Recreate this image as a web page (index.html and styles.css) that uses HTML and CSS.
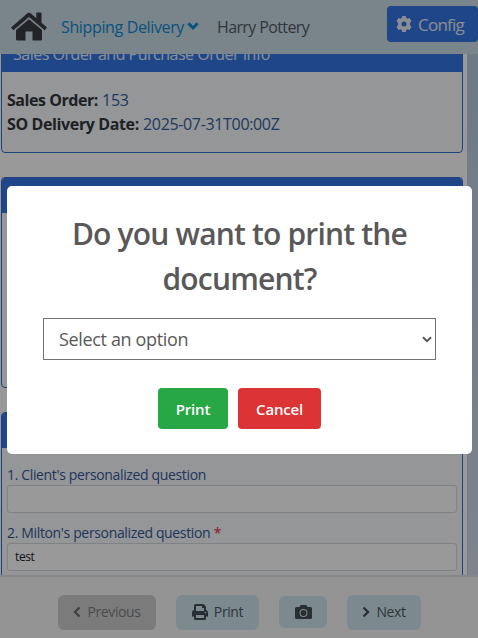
FILE: index.html
```html
<!DOCTYPE html>
<html lang="en">
<head>
<meta charset="utf-8">
<title>Shipping Delivery</title>
<link rel="stylesheet" href="styles.css">
</head>
<body>
<div class="app">
  <header class="nav">
    <svg class="home" viewBox="0 0 36 29"><path d="M18 0 0 15.500 2.300 18.200 18 5 33.700 18.200 36 15.500 30.500 10.800V.5H25.300V6.300L20 1.500Q18 0 16 1.500Z"/><path d="M18 7.200 5 18V27Q5 28.500 6.500 28.500H14.500V19.500H21.500V28.500H29.500Q31 28.500 31 27V18Z"/></svg>
    <a class="crumb">Shipping Delivery</a>
    <svg class="caret" viewBox="0 0 10 7"><path d="M1 1.200 5 5.200 9 1.200"/></svg>
    <span class="user">Harry Pottery</span>
    <button class="config"><svg viewBox="0 0 16 16"><path fill-rule="evenodd" d="M6.200 0h3.600l.5 2.100 1.200.7 2.100-.8 1.900 3.200L14 6.700v2.600l1.500 1.500-1.900 3.200-2.100-.8-1.200.7L9.800 16H6.200l-.5-2.100-1.200-.7-2.100.8L.5 10.800 2 9.300V6.700L.5 5.200 2.400 2l2.100.8 1.200-.7ZM8 5.500a2.500 2.500 0 1 0 0 5 2.500 2.500 0 0 0 0-5Z"/></svg><span>Config</span></button>
  </header>
  <main class="content">
    <div class="paper">
      <section class="card order">
        <h2 class="card-title">Sales Order and Purchase Order Info</h2>
        <div class="order-body">
          <p class="so"><b>Sales Order:</b> <span>153</span></p>
          <p class="date"><b>SO Delivery Date:</b> <span>2025-07-31T00:00Z</span></p>
        </div>
      </section>
      <section class="card details"><h2 class="card-title"></h2></section>
      <section class="card questions">
        <h2 class="card-title"></h2>
        <div class="fields">
          <label class="q1" for="q1">1. Client's personalized question</label>
          <input id="q1" type="text">
          <label class="q2" for="q2">2. Milton's personalized question <i>*</i></label>
          <input id="q2" type="text" value="test">
        </div>
      </section>
    </div>
  </main>
  <footer class="actions">
    <button class="act prev"><svg viewBox="0 0 8 12"><path class="line" d="M6.500 1.500 2 6l4.500 4.500"/></svg><span>Previous</span></button>
    <button class="act print"><svg viewBox="0 0 16 16"><path fill-rule="evenodd" d="M2 6V1.500Q2 0 3.500 0H11.500L14 2.500V6Q16 6.300 16 8.500V12.500H14V14.500Q14 16 12.500 16H3.500Q2 16 2 14.500V12.500H0V8.500Q0 6.300 2 6ZM4 2V7H12V4H10V2ZM4 11V14H12V11ZM13.300 7.800a.8.8 0 1 0 0 1.600.8.8 0 0 0 0-1.600Z"/></svg><span>Print</span></button>
    <button class="act camera"><svg viewBox="0 0 17 14"><path fill-rule="evenodd" d="M1.500 2H4.500L5.300.6Q5.600 0 6.300 0H10.700Q11.400 0 11.700.6L12.500 2H15.500Q17 2 17 3.500V12.500Q17 14 15.500 14H1.500Q0 14 0 12.500V3.500Q0 2 1.500 2ZM8.500 4a4 4 0 1 0 0 8 4 4 0 0 0 0-8ZM8.500 5a3 3 0 1 1 0 6 3 3 0 0 1 0-6Z"/></svg></button>
    <button class="act next"><svg viewBox="0 0 8 12"><path class="line" d="M1.500 1.500 6 6l-4.500 4.500"/></svg><span>Next</span></button>
  </footer>
</div>
<div class="overlay">
  <div class="modal" role="dialog">
    <h1>Do you want to print the<br>document?</h1>
    <div class="select"><span>Select an option</span><svg viewBox="0 0 10 7"><path d="M1 1.200 5 5.200 9 1.200"/></svg></div>
    <div class="modal-actions"><button class="ok"><span>Print</span></button><button class="cancel"><span>Cancel</span></button></div>
  </div>
</div>
</body>
</html>
```
FILE: styles.css
```css
* { box-sizing: border-box; }
body { margin: 0; font-family: "Open Sans", "Noto Sans", sans-serif; color: #212529; }
button, input { font-family: inherit; border: 0; }
h1, h2, p { margin: 0; }
svg { flex: none; display: block; fill: currentColor; }
span, a, b, label, h1, h2 { white-space: nowrap; }
.app { display: flex; flex-direction: column; height: 638px; overflow: hidden; }

.nav { display: flex; align-items: center; height: 54px; flex: none; padding-left: 11px; background: #cadce8; }
.home { width: 36px; height: 29px; margin-top: -2px; color: #3a3d42; }
.crumb { margin-left: 14px; width: 126px; font-size: 16px; letter-spacing: -.36px; color: #108bd2; }
.caret { width: 12px; height: 8px; margin-top: -2px; color: #108bd2; }
.caret path, .select path { fill: none; stroke: currentColor; stroke-width: 2; }
.caret path { stroke-width: 2.500; }
.user { margin-left: 18px; width: 93px; font-size: 16px; letter-spacing: -.62px; color: #545a60; }
.config { display: flex; align-items: center; gap: 6px; width: 91px; height: 36px; margin: -6px 0 0 77px; padding: 0 0 0 9px; border-radius: 4px; background: #3276e3; color: #e6ebf2; font-size: 17px; letter-spacing: -.75px; }
.config svg { width: 16px; height: 16px; }

.content { flex: 1; min-height: 0; overflow: hidden; background: linear-gradient(#b5cde0, #d3dbea); }
.paper { display: flow-root; width: 468px; height: 100%; padding-left: 1px; background: #fff; border-right: 1px solid #c8cbd0; }
.card { width: 462px; margin-bottom: 24px; border: 1px solid #3270cf; border-radius: 4px; background: #f7fafd; overflow: hidden; }
.card-title { height: 35px; background: #3276e3; color: #e8eef8; font-size: 16px; font-weight: 400; line-height: 35px; padding-left: 11px; letter-spacing: -.5px; }
.order { height: 117px; margin-top: -18px; }
.order-body { padding: 16px 5px; font-size: 16px; line-height: 24px; }
.order-body span { color: #36609f; letter-spacing: -.34px; }
.order-body b { letter-spacing: -.38px; color: #32373c; }
.so b { letter-spacing: -.45px; }
.details { height: 211px; }
.questions { height: 200px; }
.fields { display: flex; flex-direction: column; padding: 16px 5px; font-size: 14px; }
.fields label { height: 21px; line-height: 21px; letter-spacing: -.35px; color: #365998; }
.fields i { color: #e22f3e; font-style: normal; }
.fields input { width: 450px; height: 28px; margin-bottom: 9px; padding: 0 7px; border: 1px solid #d4d8dc; border-radius: 3px; background: #fff; font-size: 12px; letter-spacing: -.4px; color: #212529; }
.fields label, .fields input { position: relative; top: -.5px; }

.actions { display: flex; align-items: center; justify-content: center; gap: 20px; height: 63px; flex: none; padding: 9px 0 0 1px; border-top: 2px solid #dfe2e6; background: #f7f7f7; }
.act { display: flex; align-items: center; justify-content: center; height: 35px; padding: 0; border-radius: 6px; background: #cfe7ee; color: #4d575c; font-size: 14px; }
.act span { letter-spacing: -.4px; position: relative; top: -1px; }
.act svg { color: #444d52; }
.line { fill: none; stroke: currentColor; stroke-width: 2.300; }
.prev { width: 98px; gap: 6px; background: #cdcdcd; color: #7b7f83; }
.prev svg, .next svg { width: 8px; height: 12px; }
.prev svg { color: #676c70; }
.print { width: 83px; gap: 6px; }
.print svg { width: 16px; height: 16px; }
.camera { width: 48px; height: 32px; }
.camera svg { width: 17px; height: 14px; }
.next { width: 74px; gap: 6px; }

.overlay { position: fixed; inset: 0; background: rgba(0, 0, 0, .4); display: flex; align-items: center; justify-content: center; padding: 2px 0 0 1px; }
.modal { width: 465px; height: 268px; padding: 25px 36px 0; border-radius: 5px; background: #fff; color: #595959; }
.modal h1 { font-size: 30px; line-height: 45px; font-weight: 600; text-align: center; letter-spacing: -.82px; }
.select { display: flex; align-items: center; justify-content: space-between; height: 42px; margin-top: 17px; padding: 0 3px 0 15px; border: 1px solid #737373; font-size: 18px; letter-spacing: -.35px; }
.select svg { width: 10px; height: 7px; }
.modal-actions { display: flex; justify-content: center; gap: 10px; margin-top: 28px; }
.modal-actions button { height: 41px; padding: 0; border-radius: 4px; color: #fff; font-size: 15px; font-weight: 600; letter-spacing: -.2px; }
.ok { width: 70px; background: #28a745; }
.cancel { width: 83px; background: #dc3335; }
```
